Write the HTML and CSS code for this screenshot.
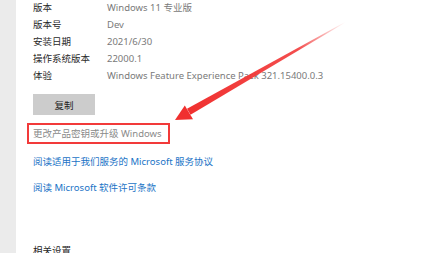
FILE: index.html
```html
<!DOCTYPE html>
<html lang="zh-CN">
<head>
<meta charset="utf-8">
<title>Windows 规格</title>
<link rel="stylesheet" href="styles.css">
</head>
<body>
<div class="page">
  <aside class="sidebar"></aside>
  <main class="content">
    <dl class="specs">
      <dt>版本</dt><dd>Windows 11 专业版</dd>
      <dt>版本号</dt><dd>Dev</dd>
      <dt>安装日期</dt><dd>2021/6/30</dd>
      <dt>操作系统版本</dt><dd>22000.1</dd>
      <dt>体验</dt><dd>Windows Feature Experience Pack 321.15400.0.3</dd>
    </dl>
    <button class="copy-btn">复制</button>
    <div class="highlight"><span class="key-link">更改产品密钥或升级 Windows</span></div>
    <a class="link first">阅读适用于我们服务的 Microsoft 服务协议</a>
    <a class="link">阅读 Microsoft 软件许可条款</a>
    <h2 class="section">相关设置</h2>
  </main>
  <svg class="arrow" width="425" height="253" viewBox="0 0 425 253">
    <defs>
      <linearGradient id="fade" x1="345" y1="22" x2="189" y2="112" gradientUnits="userSpaceOnUse">
        <stop offset="0" stop-color="#f23a3a" stop-opacity="0"/>
        <stop offset="0.3" stop-color="#f23a3a" stop-opacity="0.9"/>
        <stop offset="1" stop-color="#f0302f"/>
      </linearGradient>
    </defs>
    <polygon points="345,22 345.4,22.6 190.5,114.8 187,108.8" fill="url(#fade)"/>
    <polygon points="175,120 184.8,105.6 193,119.2" fill="#f0302f"/>
  </svg>
</div>
</body>
</html>
```

FILE: styles.css
```css
html, body {
  margin: 0;
  padding: 0;
  background: #ffffff;
}
body {
  font-family: "Noto Sans", "Noto Sans CJK SC", sans-serif;
  font-size: 9.5px;
  color: #1f1f1f;
  overflow: hidden;
}
.page {
  position: relative;
  width: 425px;
  height: 253px;
  display: flex;
  overflow: hidden;
}
.sidebar {
  width: 16px;
  flex: none;
  background: #ebebeb;
}
.content {
  flex: 1;
  padding-left: 17px;
  display: flex;
  flex-direction: column;
  align-items: flex-start;
}
.content > * {
  flex-shrink: 0;
}
.specs {
  margin: -1px 0 0 0;
  display: grid;
  grid-template-columns: 74px auto;
  line-height: 17px;
}
.specs dt {
  color: #2a2a2a;
}
.specs dd {
  margin: 0;
  color: #7a7a7a;
  white-space: nowrap;
}
.copy-btn {
  margin-top: 10px;
  width: 62px;
  height: 21px;
  border: none;
  background: #cccccc;
  font: inherit;
  color: #1f1f1f;
  padding: 0;
}
.highlight {
  margin-top: 8px;
  margin-left: -6px;
  width: 135px;
  height: 17px;
  border: 2px solid #f23a3a;
  padding-left: 4px;
  line-height: 17px;
  white-space: nowrap;
}
.key-link {
  color: #8a8a8a;
}
.link {
  color: #1a73c6;
  line-height: 14px;
  white-space: nowrap;
}
.link.first {
  margin-top: 11px;
}
.link + .link {
  margin-top: 12px;
}
.section {
  margin: 49px 0 0 0;
  font-size: 9.5px;
  font-weight: normal;
  color: #1f1f1f;
  line-height: 14px;
}
.arrow {
  position: absolute;
  left: 0;
  top: 0;
  pointer-events: none;
}
```
